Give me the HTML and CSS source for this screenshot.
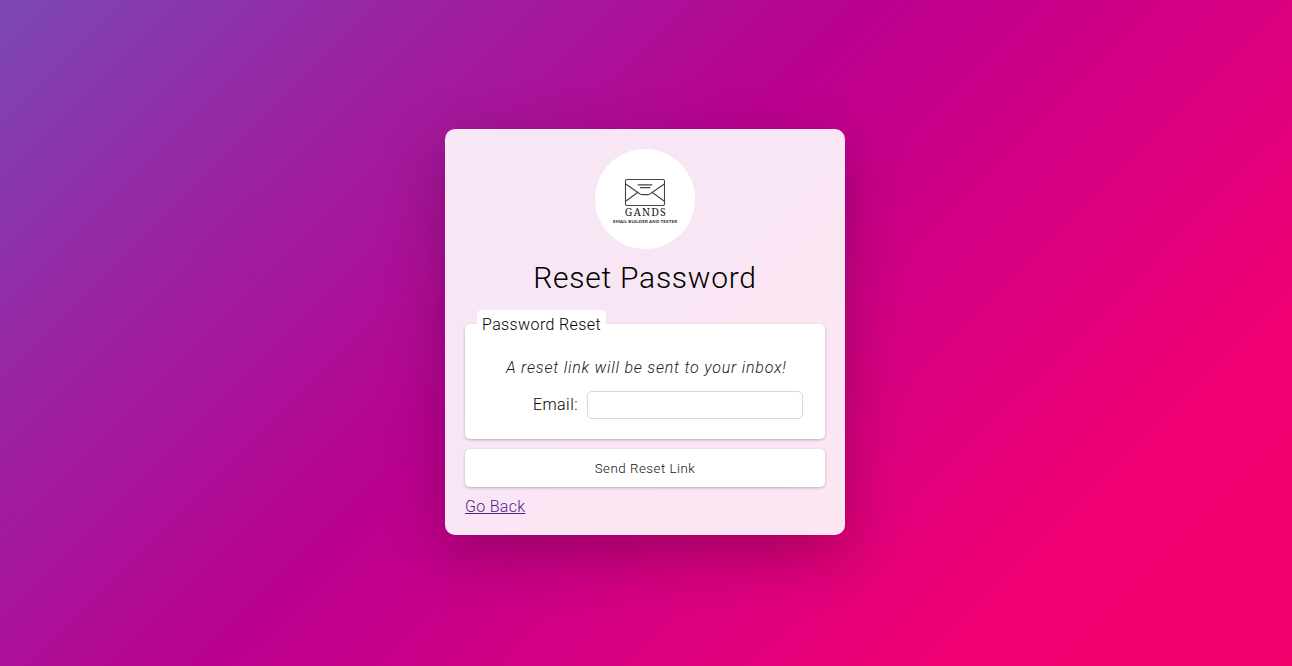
FILE: index.html
```html
<!DOCTYPE html>
<html lang="en">
<head>
<meta charset="utf-8">
<title>Reset Password</title>
<link rel="stylesheet" href="styles.css">
</head>
<body>
<main class="card">
  <svg class="logo" viewBox="0 0 100 100" role="img" aria-label="Gands">
    <circle cx="50" cy="50" r="50" fill="#fff"/>
    <g fill="none" stroke="#444" stroke-width="1.1">
      <rect x="30.5" y="30.5" width="39" height="26" rx="1.5"/>
      <path d="M30.7 35 L43.3 43.7 L45.3 45.1 Q46 45.6 47 45.6 H53 Q54 45.6 54.7 45.1 L56.7 43.7 L69.3 35 M31 52 L42.6 43.5 M69 52 L57.4 43.5"/>
      <path d="M42.7 35.9 H57.3 M45 38.6 H55.3"/>
    </g>
    <text class="brand" x="50.2" y="67.2" textLength="41">GANDS</text>
    <text class="tagline" x="50" y="73.7" textLength="64">EMAIL BUILDER AND TESTER</text>
  </svg>
  <h1 class="title">Reset Password</h1>
  <form class="form">
    <section class="group">
      <div class="legend">Password Reset</div>
      <p class="hint">A reset link will be sent to your inbox!</p>
      <div class="field"><label class="label" for="email">Email:</label><input class="input" id="email" type="email"></div>
    </section>
    <button class="submit" type="button">Send Reset Link</button>
  </form>
  <a class="back" href="#">Go Back</a>
</main>
</body>
</html>
```
FILE: styles.css
```css
* { box-sizing: border-box; }
body {
  margin: 0;
  height: 666px;
  padding-top: 129px;
  overflow: hidden;
  font: 300 16px/20px Roboto, sans-serif;
  color: #000;
  background: linear-gradient(135deg, #7b48b4 0%, #9b22a1 22%, #bb0090 45%, #da0080 66%, #f20072 83.5%, #f2006c 100%);
}
.card {
  width: 400px;
  height: 406px;
  margin-left: 445px;
  padding: 20px;
  display: flex;
  flex-direction: column;
  border-radius: 10px;
  background: rgba(255, 255, 255, .9);
  box-shadow: 0 20px 60px rgba(0, 0, 0, .25);
}
.logo { flex: none; width: 100px; height: 100px; align-self: center; }
.brand { font: 400 10.6px "Noto Serif", "Liberation Serif", serif; fill: #222; text-anchor: middle; }
.tagline { font: 700 4.4px Lato, sans-serif; fill: #222; text-anchor: middle; }
.title {
  margin: 9px 0 0;
  font-size: 30px;
  font-weight: 300;
  line-height: 40px;
  letter-spacing: .75px;
  text-align: center;
  white-space: nowrap;
}
.form { display: flex; flex-direction: column; gap: 10px; margin-top: 26px; }
.group {
  height: 115px;
  border-radius: 5px;
  background: #fff;
  box-shadow: 0 1px 3px rgba(0, 0, 0, .25);
}
.legend {
  width: 129px;
  height: 30px;
  margin: -14px 0 0 12px;
  padding: 5px;
  border-radius: 5px;
  background: #fff;
  letter-spacing: .38px;
  white-space: nowrap;
}
.hint {
  margin: 18px 0 0 41px;
  font-style: italic;
  letter-spacing: .78px;
  white-space: nowrap;
  color: #222;
}
.field { display: flex; align-items: center; justify-content: flex-end; gap: 9px; margin: 13px 22px 0 0; }
.label { letter-spacing: .45px; }
.input { width: 216px; height: 28px; border: 1px solid #d9d9d9; border-radius: 5px; background: #fff; }
.submit {
  height: 38px;
  border: 0;
  border-radius: 5px;
  background: #fff;
  box-shadow: 0 1px 3px rgba(0, 0, 0, .25);
  color: #111;
  font: 300 13.33px Roboto, sans-serif;
  letter-spacing: .5px;
}
.back { align-self: flex-start; margin-top: 10px; letter-spacing: .3px; color: #551a8b; }
```
